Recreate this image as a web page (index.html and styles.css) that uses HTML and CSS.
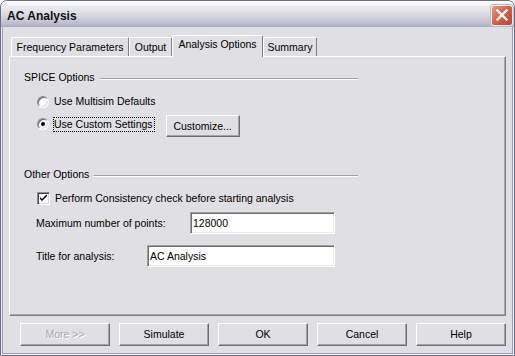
FILE: index.html
```html
<!DOCTYPE html>
<html lang="en">
<head>
    <meta charset="UTF-8">
    <title>AC Analysis</title>
    <link rel="stylesheet" href="styles.css">
</head>
<body>
    <div class="window">
        <!-- Barra de titulo -->
        <div class="titlebar">
            <span class="title">AC Analysis</span>
            <span class="close">
                <svg width="20" height="19" viewBox="0 0 20 19">
                    <path d="M5.5 4.5 L14.5 13.5 M14.5 4.5 L5.5 13.5" stroke="#fff" stroke-width="2.4" stroke-linecap="square"/>
                </svg>
            </span>
        </div>

        <div class="content">
            <!-- Abas -->
            <div class="tabs">
                <div class="tab tab-freq">Frequency Parameters</div>
                <div class="tab tab-output">Output</div>
                <div class="tab tab-active tab-options">Analysis Options</div>
                <div class="tab tab-summary">Summary</div>
            </div>

            <div class="panel">
                <div class="group-title">
                    <span>SPICE Options</span>
                    <span class="rule"></span>
                </div>
                <div class="option option-defaults">
                    <span class="radio"></span>
                    <span class="label">Use Multisim Defaults</span>
                </div>
                <div class="option option-custom">
                    <span class="radio checked"></span>
                    <span class="label focus">Use Custom Settings</span>
                    <button class="btn btn-customize">Customize...</button>
                </div>

                <div class="group-title group-other">
                    <span>Other Options</span>
                    <span class="rule"></span>
                </div>
                <div class="option option-check">
                    <span class="checkbox">
                        <svg width="7" height="7" viewBox="0 0 7 7">
                            <path d="M0 2 V4 L2 6 L7 1 V-1 L2 4 Z" fill="#000"/>
                        </svg>
                    </span>
                    <span class="label">Perform Consistency check before starting analysis</span>
                </div>
                <div class="field field-max">
                    <span class="field-label">Maximum number of points:</span>
                    <input class="text" type="text" value="128000">
                </div>
                <div class="field field-title">
                    <span class="field-label">Title for analysis:</span>
                    <input class="text" type="text" value="AC Analysis">
                </div>
            </div>

            <!-- Botoes -->
            <div class="buttons">
                <button class="btn btn-wide" disabled>More &gt;&gt;</button>
                <button class="btn btn-wide">Simulate</button>
                <button class="btn btn-wide">OK</button>
                <button class="btn btn-wide">Cancel</button>
                <button class="btn btn-wide">Help</button>
            </div>
        </div>
    </div>
</body>
</html>
```

FILE: styles.css
```css
body {
    margin: 0;
    font-family: "Liberation Sans", Arial, sans-serif;
    font-size: 10.5px;
    line-height: 13px;
    color: #000;
}
.window {
    width: 515px;
    height: 356px;
    box-sizing: border-box;
    border: 1px solid #6d6d8b;
    border-radius: 7px 7px 0 0;
    background: #f1f1f5;
    overflow: hidden;
}
.titlebar {
    height: 26px;
    display: flex;
    align-items: flex-start;
    justify-content: space-between;
    padding: 0 1px 0 6px;
    background: linear-gradient(#ffffff 0%, #ececf2 20%, #d8d8e2 55%, #bebece 85%, #acacc0 100%);
    border-radius: 6px 6px 0 0;
}
.title {
    margin-top: 8px;
    font-size: 12px;
    line-height: 14px;
    font-weight: bold;
    color: #111;
}
.close {
    margin-top: 4px;
    width: 20px;
    height: 19px;
    border: 1px solid #f4f4f4;
    border-radius: 3px;
    background: linear-gradient(135deg, #ec9683 0%, #d9624a 45%, #c2432c 100%);
    box-shadow: 0 0 0 1px #b9b9c9;
    display: flex;
}
.content {
    height: 327px;
    box-sizing: border-box;
    margin: 0 1px 1px;
    border: 1px solid #9d9db4;
    border-top: none;
    background: #e0dfe3;
    padding: 8px 6px 0;
}
/* Abas */
.tabs {
    display: flex;
    align-items: flex-end;
    padding-left: 2px;
    margin-bottom: -1px;
}
.tab {
    box-sizing: border-box;
    height: 19px;
    margin-bottom: 1px;
    border-top: 1px solid #fff;
    border-left: 1px solid #fff;
    border-right: 1px solid #808080;
    border-radius: 2px 2px 0 0;
    background: #e0dfe3;
    text-align: center;
    padding-top: 3px;
    white-space: nowrap;
}
.tab-freq { width: 118px; }
.tab-output { width: 43px; }
.tab-options { width: 91px; }
.tab-summary { width: 54px; }
.tab-active {
    height: 22px;
    margin-bottom: 0;
    padding-top: 2px;
    position: relative;
    z-index: 1;
}
.panel {
    height: 260px;
    box-sizing: border-box;
    border-top: 1px solid #fff;
    border-left: 1px solid #fff;
    border-right: 1px solid #808080;
    border-bottom: 1px solid #808080;
    box-shadow: inset -1px -1px 0 #a9a8ae;
    padding: 14px 0 0 14px;
}
.group-title {
    display: flex;
    align-items: flex-start;
    width: 334px;
}
.group-title .rule {
    flex: 1;
    margin: 7px 0 0 5px;
    border-top: 1px solid #a0a0a4;
    border-bottom: 1px solid #fff;
}
.group-other {
    margin-top: 31px;
}
.option {
    display: flex;
    align-items: center;
    padding-left: 13px;
}
.option-defaults { margin-top: 10px; }
.option-custom { margin-top: 6px; }
.option-check { margin-top: 10px; }
.label {
    border: 1px solid transparent;
    padding: 0 1px 0 0;
    margin-left: 4px;
    white-space: nowrap;
}
.label.focus {
    border: 1px dotted #000;
}
.option-custom .label,
.option-custom .radio {
    margin-bottom: 4px;
}
.radio {
    width: 12px;
    height: 12px;
    box-sizing: border-box;
    border-radius: 50%;
    border: 1px solid;
    border-color: #8d8d8d #fff #fff #8d8d8d;
    box-shadow: inset 1px 1px 0 #6a6a6a, inset -1px -1px 0 #dcdbd6;
    background: #fff;
    display: flex;
    align-items: center;
    justify-content: center;
}
.radio.checked::after {
    content: "";
    width: 4px;
    height: 4px;
    border-radius: 50%;
    background: #000;
}
.checkbox {
    width: 13px;
    height: 13px;
    box-sizing: border-box;
    border: 1px solid;
    border-color: #8d8d8d #fff #fff #8d8d8d;
    box-shadow: inset 1px 1px 0 #404040, inset -1px -1px 0 #dcdbd6;
    background: #fff;
    display: flex;
    align-items: center;
    justify-content: center;
}
.field {
    display: flex;
    align-items: center;
    padding-left: 12px;
}
.field-max { margin-top: 6px; }
.field-title { margin-top: 11px; }
.field-max .field-label { width: 154px; }
.field-title .field-label { width: 111px; }
.text {
    box-sizing: border-box;
    height: 22px;
    margin: 0;
    padding: 0 2px;
    border: 1px solid;
    border-color: #a0a0a0 #fff #fff #a0a0a0;
    box-shadow: inset 1px 1px 0 #6e6e6e, inset -1px -1px 0 #eceae4;
    background: #fff;
    font: inherit;
    color: #000;
    outline: none;
}
.field-max .text { width: 145px; }
.field-title .text { width: 188px; }
.btn {
    box-sizing: border-box;
    margin: 0;
    padding: 0;
    border: 1px solid;
    border-color: #fff #6f6f6f #6f6f6f #fff;
    box-shadow: inset -1px -1px 0 #a4a3a8;
    background: #e0dfe3;
    font: inherit;
    color: #000;
    text-align: center;
}
.btn-customize {
    width: 74px;
    height: 22px;
    margin-left: 11px;
}
.btn:disabled {
    color: #a9a8ad;
    text-shadow: 1px 1px 0 #fff;
}
.buttons {
    display: flex;
    gap: 9px;
    margin-top: 7px;
    padding-left: 11px;
}
.btn-wide {
    width: 90px;
    height: 23px;
}
```
